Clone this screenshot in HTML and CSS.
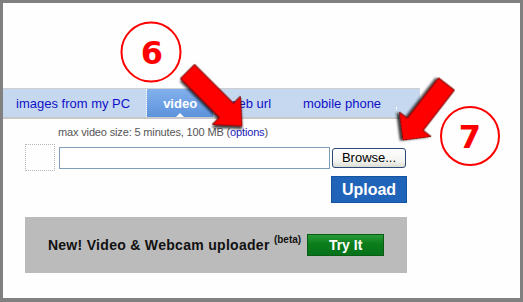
FILE: index.html
```html
<!DOCTYPE html>
<html>
<head>
<meta charset="utf-8">
<link rel="stylesheet" href="styles.css">
</head>
<body>
<div class="frame">
  <nav class="tabs">
    <a class="tab first">images from my PC</a>
    <a class="tab active">video</a>
    <a class="tab">web url</a>
    <a class="tab last">mobile phone</a>
  </nav>
  <div class="content">
    <p class="limits">max video size: 5 minutes, 100 MB (<a class="link">options</a>)</p>
    <div class="file-row">
      <div class="thumb"></div>
      <div class="file-input"></div>
      <button class="browse">Browse...</button>
    </div>
    <div class="actions">
      <button class="upload">Upload</button>
    </div>
    <div class="promo">
      <span class="promo-text">New! Video &amp; Webcam uploader <sup class="beta">(beta)</sup></span>
      <button class="try">Try It</button>
    </div>
  </div>
</div>
<svg class="annotations" width="523" height="302" viewBox="0 0 523 302" xmlns="http://www.w3.org/2000/svg">
  <defs>
    <filter id="shadow" x="-30%" y="-30%" width="160%" height="160%">
      <feDropShadow dx="2" dy="2" stdDeviation="1.3" flood-color="#000" flood-opacity="0.75"/>
    </filter>
  </defs>
  <circle cx="151" cy="52" r="29.5" fill="none" stroke="#ff0000" stroke-width="2"/>
  <text x="152" y="53" class="num" text-anchor="middle" dominant-baseline="central">6</text>
  <circle cx="470" cy="136" r="29" fill="none" stroke="#ff0000" stroke-width="2"/>
  <text x="470" y="137" class="num" text-anchor="middle" dominant-baseline="central">7</text>
  <g transform="translate(187.5 71.5) rotate(45)" filter="url(#shadow)">
    <polygon points="0,-10 55,-10 55,-20 77,0 55,20 55,10 0,10" fill="#ff0000" stroke="#700000" stroke-width="1"/>
  </g>
  <g transform="translate(446.5 84) rotate(127.8)" filter="url(#shadow)">
    <polygon points="0,-10 51,-10 51,-20 71,0 51,20 51,10 0,10" fill="#ff0000" stroke="#700000" stroke-width="1"/>
  </g>
</svg>
</body>
</html>
```
FILE: styles.css
```css
html, body {
  margin: 0;
  padding: 0;
}
body {
  position: relative;
  width: 523px;
  height: 302px;
  overflow: hidden;
  font-family: "Liberation Sans", Arial, sans-serif;
  background: #808080;
}
.frame {
  box-sizing: border-box;
  width: 523px;
  height: 302px;
  border: 3px solid #808080;
  border-bottom-width: 4px;
  background: #fefefe;
  padding-top: 85px;
}
.tabs {
  display: flex;
  width: 417px;
  height: 28px;
  background: #c5d8ef;
  border-top: 1px solid #cfcfcf;
  border-bottom: 2px solid #c9c9c9;
}
.tab {
  display: flex;
  align-items: center;
  padding: 0 16px;
  font-size: 13px;
  color: #1010c8;
  position: relative;
}
.tab.first {
  padding-left: 13px;
  border-right: 1px dotted #ffffff;
}
.tab.active {
  color: #fff;
  font-weight: bold;
  background: linear-gradient(#82b0ec, #5d93dc);
}
.tab.active::after {
  content: "";
  position: absolute;
  left: 50%;
  bottom: 0;
  margin-left: -4px;
  border-left: 4px solid transparent;
  border-right: 4px solid transparent;
  border-bottom: 4px solid #fff;
}
.tab.last::after {
  content: "";
  position: absolute;
  right: 0;
  bottom: 0;
  height: 10px;
  border-right: 1px dotted #fff;
}
.content {
  width: 382px;
  padding-left: 22px;
}
.limits {
  margin: 6px 0 0 33px;
  font-size: 11px;
  line-height: 14px;
  letter-spacing: -0.15px;
  color: #555;
}
.link {
  color: #1a1ab8;
}
.file-row {
  display: flex;
  align-items: center;
  margin-top: 5px;
}
.thumb {
  box-sizing: border-box;
  width: 30px;
  height: 27px;
  border: 1px dotted #b8b8b8;
}
.file-input {
  box-sizing: border-box;
  width: 271px;
  height: 22px;
  margin-left: 4px;
  border: 1px solid #7f9db9;
  background: #fff;
}
.browse {
  box-sizing: border-box;
  width: 74px;
  height: 20px;
  margin-left: 2px;
  padding: 0;
  border: 1px solid #2b4a78;
  border-radius: 3px;
  background: linear-gradient(#ffffff, #f2f2ee 70%, #dcdcd4);
  font-family: "Liberation Sans", Arial, sans-serif;
  font-size: 13px;
  color: #000;
}
.actions {
  display: flex;
  justify-content: flex-end;
  margin-top: 5px;
}
.upload {
  box-sizing: border-box;
  width: 76px;
  height: 27px;
  padding: 0;
  border: 1px solid #15549f;
  background: #1f64b9;
  color: #fff;
  font-family: "Liberation Sans", Arial, sans-serif;
  font-size: 16px;
  font-weight: bold;
}
.promo {
  display: flex;
  align-items: center;
  justify-content: center;
  height: 56px;
  margin-top: 14px;
  background: #bbbbbb;
}
.promo-text {
  font-size: 14px;
  font-weight: bold;
  letter-spacing: 0.3px;
  color: #111;
}
.beta {
  font-size: 10px;
  vertical-align: 7px;
  line-height: 0;
  letter-spacing: 0;
}
.try {
  box-sizing: border-box;
  width: 77px;
  height: 22px;
  margin-left: 6px;
  padding: 0;
  border: 1px solid #0a5c14;
  background: linear-gradient(#2a9a38, #0b7d1b 45%, #06721a);
  color: #fff;
  font-family: "Liberation Sans", Arial, sans-serif;
  font-size: 14px;
  font-weight: bold;
}
.annotations {
  position: absolute;
  left: 0;
  top: 0;
  pointer-events: none;
}
.num {
  font-family: "DejaVu Sans", sans-serif;
  font-weight: bold;
  font-size: 32px;
  fill: #ff0000;
}
```
